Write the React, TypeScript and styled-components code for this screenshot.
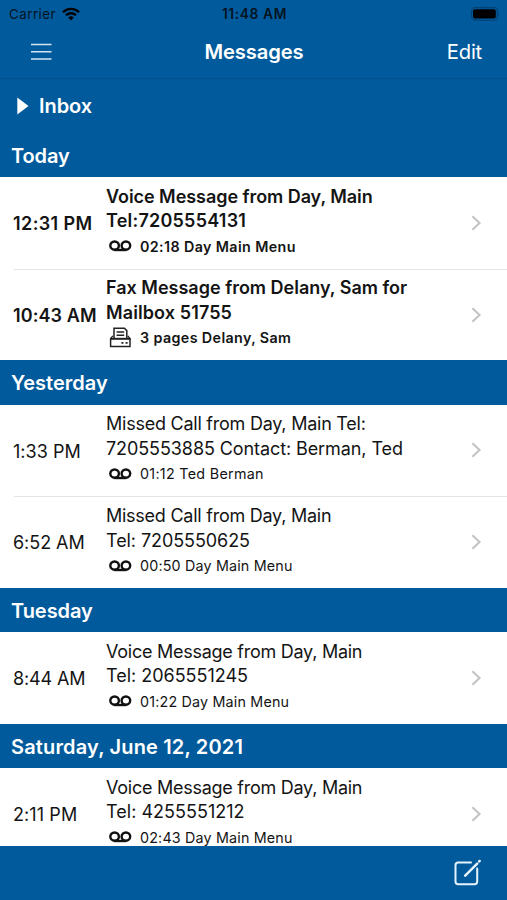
import React from "react";
import styled, { createGlobalStyle } from "styled-components";

const BLUE = "#005a9c";

const GlobalStyle = createGlobalStyle`
  * { box-sizing: border-box; }
  body { margin: 0; background: ${BLUE}; overflow: hidden; }
  h1, h2, p { margin: 0; font: inherit; }
  button { padding: 0; border: 0; background: none; color: inherit; font: inherit; letter-spacing: inherit; }
  svg { display: block; flex: none; }
`;

const Screen = styled.div`
  width: 507px;
  height: 900px;
  display: flex;
  flex-direction: column;
  overflow: hidden;
  background: ${BLUE};
  color: #fff;
  font-family: Inter, "Liberation Sans", sans-serif;
`;

const StatusBar = styled.div`
  flex: none;
  height: 27px;
  display: grid;
  grid-template-columns: 1fr auto 1fr;
  align-items: center;
  padding: 0 7px 0 9px;
  color: #06131f;
  font-size: 13.3px;
`;

const Carrier = styled.div`
  display: flex;
  align-items: center;
  gap: 6px;
  letter-spacing: 0.5px;
`;

const Clock = styled.div`
  font-size: 13.8px;
  font-weight: 600;
  letter-spacing: 0.6px;
`;

const BatteryHolder = styled.div`
  justify-self: end;
`;

const NavBar = styled.header`
  flex: none;
  height: 52px;
  display: grid;
  grid-template-columns: 1fr auto 1fr;
  align-items: center;
  padding: 0 25px 2px 31px;
  border-bottom: 1px solid #00508d;
  font-size: 20.2px;
`;

const Title = styled.h1`
  font-weight: 580;
  letter-spacing: -0.15px;
  margin-right: 5px;
`;

const EditButton = styled.button`
  justify-self: end;
  letter-spacing: -0.2px;
`;

const InboxBar = styled.div`
  flex: none;
  height: 53.8px;
  display: flex;
  align-items: center;
  gap: 10px;
  padding: 1px 0 0 17px;
  font-size: 20px;
  font-weight: 560;
  letter-spacing: -0.05px;
`;

const List = styled.main`
  flex: 1;
  min-height: 0;
  overflow: hidden;
`;

const SectionTitle = styled.h2<{ $track?: number }>`
  height: 44.3px;
  padding: 0 11px;
  line-height: 46px;
  font-size: 20px;
  font-weight: 560;
  letter-spacing: ${(p) => p.$track ?? 0}px;
  background: ${BLUE};
`;

const Row = styled.article<{ $unread?: boolean }>`
  height: 91.65px;
  display: grid;
  grid-template-columns: 93px 1fr 12px;
  align-items: center;
  padding: 0 25px 0 13px;
  background: #fff;
  color: #141414;
  font-size: 18px;
  font-weight: ${(p) => (p.$unread ? 580 : 400)};

  & + & {
    background: linear-gradient(#e4e4e4, #e4e4e4) 14px 0 / 100% 1px no-repeat #fff;
  }
`;

const Time = styled.time<{ $track?: number }>`
  padding-top: 1.4px;
  white-space: nowrap;
  letter-spacing: ${(p) => p.$track ?? 0}px;
`;

const Body = styled.div`
  height: 100%;
  padding-top: 6.7px;
`;

const Line = styled.p<{ $track?: number }>`
  height: 24.5px;
  line-height: 25px;
  white-space: pre;
  letter-spacing: ${(p) => p.$track ?? 0}px;
`;

const Meta = styled.div<{ $track?: number }>`
  height: 27px;
  display: flex;
  align-items: center;
  font-size: 14.3px;
  white-space: pre;
  letter-spacing: ${(p) => p.$track ?? 0}px;
`;

const MetaIcon = styled.span`
  width: 34px;
  padding-left: 3px;
`;

const Toolbar = styled.footer`
  flex: none;
  height: 54px;
  display: flex;
  align-items: center;
  justify-content: flex-end;
  padding: 0 26px 1px 0;
`;

const WifiIcon = () => (
  <svg width="18" height="14" viewBox="0 0 18 14" fill="none" stroke="#000" strokeWidth="2.3">
    <path d="M1 5.2a11.4 11.4 0 0 1 16 0" />
    <path d="M4 8.3a7.1 7.1 0 0 1 10 0" />
    <path d="M9 13.4 6.2 10.6a4 4 0 0 1 5.6 0Z" fill="#000" stroke="none" />
  </svg>
);

const BatteryIcon = () => (
  <svg width="29" height="14" viewBox="0 0 29 14">
    <rect x="0.6" y="0.6" width="25.8" height="12.6" rx="3.6" fill="none" stroke="#004173" strokeWidth="1.1" />
    <rect x="2" y="2.2" width="22.8" height="9.4" rx="2" fill="#000" />
    <path d="M27.4 4.8q1.6 2.2 0 4.4Z" fill="#003d6b" />
  </svg>
);

const MenuIcon = () => (
  <svg width="21" height="18" viewBox="0 0 21 18" stroke="#d4e6f4" strokeWidth="1.5">
    <path d="M0 1.4h20.5M0 8.8h20.5M0 16.1h20.5" />
  </svg>
);

const TriangleIcon = () => (
  <svg width="12" height="18" viewBox="0 0 12 18">
    <path d="M.3.5 11.5 9 .3 17.5Z" fill="#fff" />
  </svg>
);

const ChevronIcon = () => (
  <svg width="12" height="16" viewBox="0 0 12 16" fill="none" stroke="#c2c2c5" strokeWidth="2">
    <path d="m2.4 1.2 7.2 6.8-7.2 6.8" />
  </svg>
);

const VoicemailIcon = () => (
  <svg width="23" height="12" viewBox="0 0 23 12" fill="none" stroke="#111" strokeWidth="2.4">
    <ellipse cx="5.6" cy="5.6" rx="4.3" ry="4.1" />
    <ellipse cx="16.9" cy="5.6" rx="4.3" ry="4.1" />
    <path d="M5.2 10h12" />
  </svg>
);

const FaxIcon = () => (
  <svg width="23" height="21" viewBox="0 0 23 21" fill="none" stroke="#222" strokeWidth="1.5">
    <path d="M5 11.2V1.2h10.4l2.4 2.4v7.6" />
    <path d="M7.6 5h7.6M7.6 8.2h7.6" strokeWidth="1.5" />
    <path d="M3.8 8.8 1.4 11.8M18.9 8.8l2.2 3" strokeWidth="1.3" />
    <path d="M1 11.8h20.6" strokeWidth="2" />
    <path d="M1.6 11.8v7.8h19.4v-7.8" />
    <path d="M12.4 15.8h2M16.6 15.8h2" strokeWidth="1.8" />
  </svg>
);

const ComposeIcon = () => (
  <svg width="27" height="27" viewBox="0 0 27 27" fill="none" stroke="#e6f3fc" strokeWidth="2" strokeLinecap="round">
    <path d="M17 3.6H4.2Q1.5 3.6 1.5 6.3v16.2q0 2.7 2.7 2.7h16.3q2.7 0 2.7-2.7V9.5" />
    <path d="m11.2 16.6 12-12M25.2 2.4l.4-.4" strokeWidth="2.5" />
  </svg>
);

type Tracked = [text: string, track: number];

type Message = {
  time: Tracked;
  lines: Tracked[];
  meta: Tracked;
  unread?: boolean;
  fax?: boolean;
};

const sections: { title: Tracked; messages: Message[] }[] = [
  {
    title: ["Today", -0.1],
    messages: [
      {
        time: ["12:31 PM", 0.4],
        lines: [["Voice Message from Day, Main", -0.05], ["Tel:7205554131", 0.22]],
        meta: ["02:18 Day Main Menu", 0.38],
        unread: true,
      },
      {
        time: ["10:43 AM", 0.1],
        lines: [["Fax Message from Delany, Sam for", 0], ["Mailbox 51755", 0.1]],
        meta: ["3 pages Delany, Sam", 0.38],
        unread: true,
        fax: true,
      },
    ],
  },
  {
    title: ["Yesterday", 0],
    messages: [
      {
        time: ["1:33 PM", 0.05],
        lines: [["Missed Call from Day, Main Tel:", -0.24], ["7205553885 Contact: Berman, Ted", -0.09]],
        meta: ["01:12 Ted Berman", 0.3],
      },
      {
        time: ["6:52 AM", -0.05],
        lines: [["Missed Call from Day, Main", -0.25], ["Tel: 7205550625", -0.08]],
        meta: ["00:50 Day Main Menu", 0.18],
      },
    ],
  },
  {
    title: ["Tuesday", -0.05],
    messages: [
      {
        time: ["8:44 AM", -0.15],
        lines: [["Voice Message from Day, Main", -0.26], ["Tel: 2065551245", -0.02]],
        meta: ["01:22 Day Main Menu", 0.19],
      },
    ],
  },
  {
    title: ["Saturday, June 12, 2021", 0.16],
    messages: [
      {
        time: ["2:11 PM", 0.1],
        lines: [["Voice Message from Day, Main", -0.26], ["Tel: 4255551212", 0.02]],
        meta: ["02:43 Day Main Menu", 0.18],
      },
    ],
  },
];

const MessageRow = ({ time, lines, meta, unread, fax }: Message) => (
  <Row $unread={unread}>
    <Time $track={time[1]}>{time[0]}</Time>
    <Body>
      {lines.map(([text, track]) => (
        <Line key={text} $track={track}>
          {text}
        </Line>
      ))}
      <Meta $track={meta[1]}>
        <MetaIcon>{fax ? <FaxIcon /> : <VoicemailIcon />}</MetaIcon>
        {meta[0]}
      </Meta>
    </Body>
    <ChevronIcon />
  </Row>
);

export default function App() {
  return (
    <Screen>
      <GlobalStyle />
      <StatusBar>
        <Carrier>
          Carrier
          <WifiIcon />
        </Carrier>
        <Clock>11:48 AM</Clock>
        <BatteryHolder>
          <BatteryIcon />
        </BatteryHolder>
      </StatusBar>
      <NavBar>
        <MenuIcon />
        <Title>Messages</Title>
        <EditButton>Edit</EditButton>
      </NavBar>
      <InboxBar>
        <TriangleIcon />
        Inbox
      </InboxBar>
      <List>
        {sections.map(({ title, messages }) => (
          <section key={title[0]}>
            <SectionTitle $track={title[1]}>{title[0]}</SectionTitle>
            {messages.map((message) => (
              <MessageRow key={message.time[0]} {...message} />
            ))}
          </section>
        ))}
      </List>
      <Toolbar>
        <ComposeIcon />
      </Toolbar>
    </Screen>
  );
}
